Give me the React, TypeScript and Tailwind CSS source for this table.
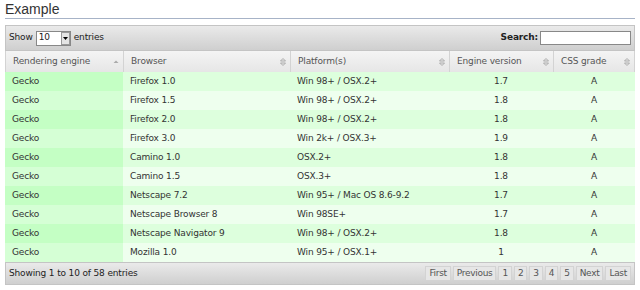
const rows = [
  ["Gecko", "Firefox 1.0", "Win 98+ / OSX.2+", "1.7", "A"],
  ["Gecko", "Firefox 1.5", "Win 98+ / OSX.2+", "1.8", "A"],
  ["Gecko", "Firefox 2.0", "Win 98+ / OSX.2+", "1.8", "A"],
  ["Gecko", "Firefox 3.0", "Win 2k+ / OSX.3+", "1.9", "A"],
  ["Gecko", "Camino 1.0", "OSX.2+", "1.8", "A"],
  ["Gecko", "Camino 1.5", "OSX.3+", "1.8", "A"],
  ["Gecko", "Netscape 7.2", "Win 95+ / Mac OS 8.6-9.2", "1.7", "A"],
  ["Gecko", "Netscape Browser 8", "Win 98SE+", "1.7", "A"],
  ["Gecko", "Netscape Navigator 9", "Win 98+ / OSX.2+", "1.8", "A"],
  ["Gecko", "Mozilla 1.0", "Win 95+ / OSX.1+", "1", "A"],
];

function SortBoth() {
  return (
    <svg width="8" height="10" viewBox="0 0 8 10" className="shrink-0">
      <path d="M4 1.5 L6.5 4 L1.5 4 Z" fill="none" stroke="#aaa" strokeWidth="1" />
      <path d="M4 8.5 L6.5 6 L1.5 6 Z" fill="none" stroke="#aaa" strokeWidth="1" />
    </svg>
  );
}

function SortUp() {
  return (
    <svg width="8" height="10" viewBox="0 0 8 10" className="shrink-0">
      <path d="M4 3.5 L6.5 6 L1.5 6 Z" fill="#aaa" />
    </svg>
  );
}

const cols = [
  { label: "Rendering engine", w: "w-[118px]", icon: <SortUp /> },
  { label: "Browser", w: "w-[167px]", icon: <SortBoth /> },
  { label: "Platform(s)", w: "w-[159px]", icon: <SortBoth /> },
  { label: "Engine version", w: "w-[104px]", icon: <SortBoth /> },
  { label: "CSS grade", w: "flex-1", icon: <SortBoth /> },
];

function PageBtn({ label }: { label: string }) {
  return (
    <span className="px-[3px] h-[15px] flex items-center border border-[#d3d3d3] bg-[#e6e6e6] text-[#555] tracking-[-0.3px]">
      {label}
    </span>
  );
}

export default function App() {
  return (
    <div className="w-[640px] h-[290px] bg-white text-[#333] font-['DejaVu_Sans',sans-serif] text-[9px] tracking-[-0.15px] overflow-hidden">
      <div className="mx-[5px] h-[19px] border-b border-[#a7b3c7] text-[14px] leading-[18px] tracking-normal text-[#333] font-['Liberation_Sans',sans-serif]">
        Example
      </div>
      <div className="mx-[5px] mt-[6px]">
        <div className="h-[26px] flex items-center justify-between px-[3px] border border-[#c4c4c4] bg-gradient-to-b from-[#eaeaea] to-[#cfcfcf]">
          <div className="flex items-center gap-[3px] text-[#222]">
            <span>Show</span>
            <div className="flex items-center h-[15px] w-[35px] bg-white border border-[#888]">
              <span className="flex-1 pl-[2px]">10</span>
              <span className="w-[9px] h-[13px] bg-[#e4e4e4] border border-[#999] flex items-center justify-center">
                <svg width="5" height="3" viewBox="0 0 5 3"><path d="M0 0 L5 0 L2.5 3 Z" fill="#000" /></svg>
              </span>
            </div>
            <span>entries</span>
          </div>
          <div className="flex items-center gap-[2px] font-bold text-[#222]">
            <span>Search:</span>
            <div className="w-[91px] h-[14px] bg-white border border-[#888]" />
          </div>
        </div>
        <div className="flex h-[21px] bg-gradient-to-b from-[#f4f4f4] to-[#e6e6e6] border-l border-r border-[#d3d3d3]">
          {cols.map((c, i) => (
            <div
              key={c.label}
              className={`${c.w} flex items-center justify-between pl-[7px] pr-[3px] text-[#555] ${i < 4 ? "border-r border-[#d3d3d3]" : ""}`}
            >
              <span>{c.label}</span>
              {c.icon}
            </div>
          ))}
        </div>
        <div>
          {rows.map((r, i) => (
            <div key={i} className={`flex h-[19px] items-center ${i % 2 === 0 ? "bg-[#ddffdd]" : "bg-[#eeffee]"}`}>
              <div className={`w-[118px] h-full flex items-center pl-[7px] ${i % 2 === 0 ? "bg-[#c4ffc4]" : "bg-[#d5ffd5]"}`}>{r[0]}</div>
              <div className="w-[167px] pl-[7px]">{r[1]}</div>
              <div className="w-[159px] pl-[7px]">{r[2]}</div>
              <div className="w-[104px] text-center">{r[3]}</div>
              <div className="flex-1 text-center">{r[4]}</div>
            </div>
          ))}
        </div>
        <div className="h-[23px] flex items-center justify-between pl-[3px] pr-[3px] border border-[#c4c4c4] bg-gradient-to-b from-[#eaeaea] to-[#cfcfcf]">
          <span className="text-[#222]">Showing 1 to 10 of 58 entries</span>
          <div className="flex gap-[2px]">
            {["First", "Previous", "1", "2", "3", "4", "5", "Next", "Last"].map((p) => (
              <PageBtn key={p} label={p} />
            ))}
          </div>
        </div>
      </div>
    </div>
  );
}
